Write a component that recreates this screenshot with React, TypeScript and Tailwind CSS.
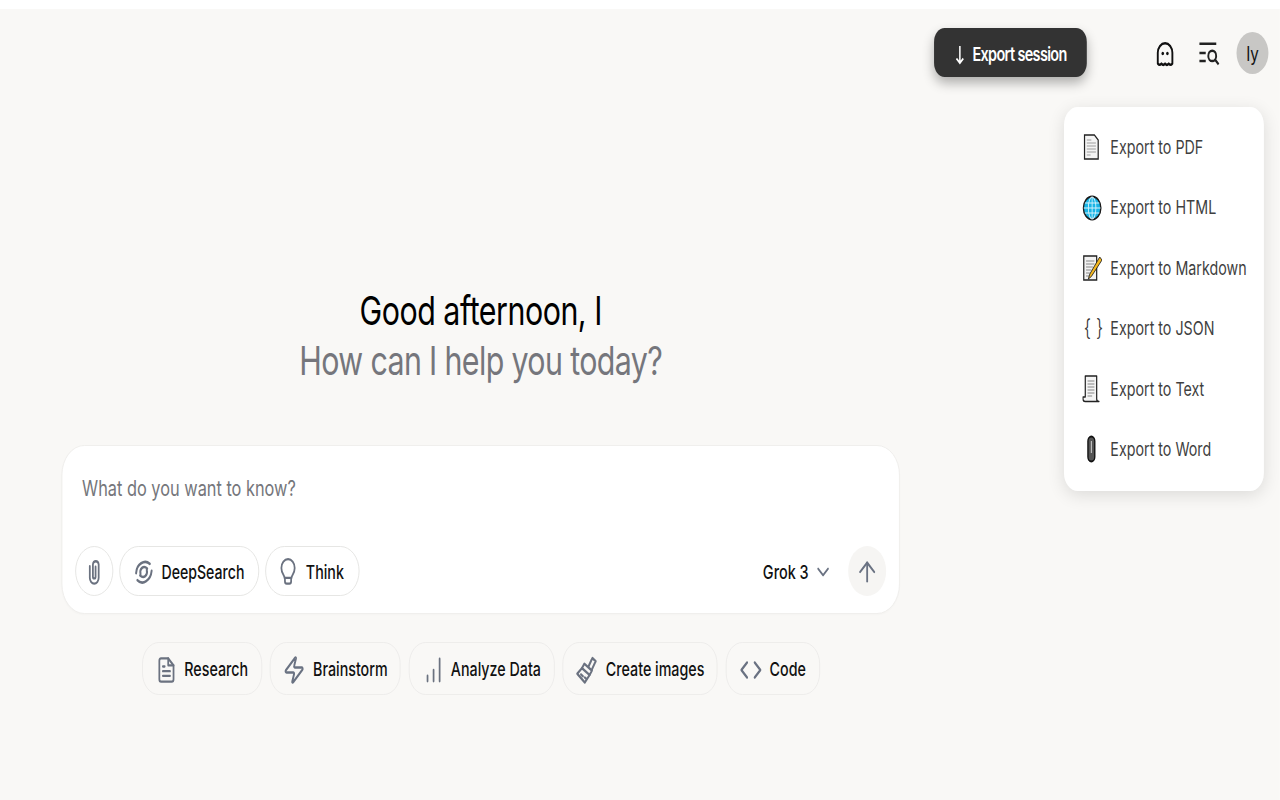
import { ArrowUp, ChevronDown, Zap, Code as CodeIcon } from 'lucide-react';
import type { ReactNode } from 'react';

const Ghost = () => (
  <svg width="28" height="26" viewBox="0 0 24 23" fill="none" stroke="#111" strokeWidth="2.200" strokeLinejoin="round">
    <path d="M3.500 20V10.500a8.500 8.500 0 0 1 17 0V20c-1.400 1.400-2.800 1.400-4.250 0-1.400 1.400-2.850 1.400-4.250 0-1.400 1.400-2.850 1.400-4.250 0-1.450 1.400-2.850 1.400-4.250 0z" />
    <circle cx="9.300" cy="11" r="1.500" fill="#111" stroke="none" />
    <circle cx="14.700" cy="11" r="1.500" fill="#111" stroke="none" />
  </svg>
);

const HistorySearch = () => (
  <svg width="30" height="28" viewBox="0 0 26 24" fill="none" stroke="#222" strokeWidth="2.200" strokeLinecap="square">
    <path d="M3 4h17M3 12h5M3 19h5" />
    <circle cx="16.500" cy="14.500" r="4.500" />
    <path d="M20 18l3 3" />
  </svg>
);

const Clip = () => (
  <svg width="28" height="30" viewBox="0 0 24 24" fill="none" stroke="#6b7280" strokeWidth="2" strokeLinecap="round">
    <path d="M7 7v10a5 5 0 0 0 10 0V5.500a3.300 3.300 0 0 0-6.500 0V16a1.500 1.500 0 0 0 3 0V7.500" />
  </svg>
);

const Swirl = () => (
  <svg width="30" height="28" viewBox="0 0 24 24" fill="none" stroke="#6b7280" strokeWidth="2.200" strokeLinecap="round">
    <path d="M19 5C13 1 4 5 3.500 13" />
    <path d="M5 19c6 5 15 0 16-8" />
    <path d="M8.500 14C7 9 12 6 16 9" />
    <path d="M15.500 10c1.500 5-3.500 8-7.500 5" />
  </svg>
);

const Bulb = () => (
  <svg width="28" height="30" viewBox="0 0 24 24" fill="none" stroke="#6b7280" strokeWidth="2" strokeLinecap="round" strokeLinejoin="round">
    <path d="M8 17c0-2.500-3.500-3.500-3.500-8.500a7.500 7.500 0 0 1 15 0c0 5-3.500 6-3.500 8.500z" />
    <path d="M8.500 17v3a2 2 0 0 0 2 2h3a2 2 0 0 0 2-2v-3" />
  </svg>
);

const ResearchDoc = () => (
  <svg width="28" height="28" viewBox="0 0 24 24" fill="none" stroke="#6b7280" strokeWidth="2" strokeLinecap="round" strokeLinejoin="round">
    <path d="M6 2h8l6 6v12a2 2 0 0 1-2 2H6a2 2 0 0 1-2-2V4a2 2 0 0 1 2-2z" />
    <path d="M14 2v6h6M8 9h2M8 13h8M8 17h8" />
  </svg>
);

const Bars = () => (
  <svg width="25" height="28" viewBox="0 0 22 24" fill="none" stroke="#6b7280" strokeWidth="2" strokeLinecap="round">
    <path d="M4 22v-5M11 22V12M18 22V2" />
  </svg>
);

const Brush = () => (
  <svg width="30" height="30" viewBox="0 0 24 24" fill="none" stroke="#6b7280" strokeWidth="2" strokeLinecap="round" strokeLinejoin="round">
    <path d="M14 9l3-5 1-1.500 3.500 2.500-1 1.500-3 5" />
    <path d="M9.500 7l8 5.500-2.500 3.500-8-5.500z" />
    <path d="M7 10.500L2 15l8 7 5-6" />
    <path d="M6 15.500l2 1.500M10 18l1.500 1" />
  </svg>
);

const ThinArrow = () => (
  <svg width="14" height="20" viewBox="0 0 14 20" fill="none" stroke="#fff" strokeWidth="2">
    <path d="M7 1v17M2.500 13.500L7 18l4.500-4.500" />
  </svg>
);

const Page = () => (
  <svg width="24" height="26" viewBox="0 0 24 26">
    <path d="M3 1h13l5 5v19H3z" fill="#f4f4f4" stroke="#222" strokeWidth="1.600" />
    <path d="M6 6h6M6 9h12M6 12h12M6 15h12M6 18h12M6 21h5" stroke="#bbb" strokeWidth="1.400" />
  </svg>
);

const Globe = () => (
  <svg width="26" height="26" viewBox="0 0 26 26">
    <circle cx="13" cy="13" r="11.500" fill="#19b5e6" stroke="#1a1a1a" strokeWidth="1.800" />
    <g fill="none" stroke="#d8f3fb" strokeWidth="1.100">
      <ellipse cx="13" cy="13" rx="5" ry="11" />
      <path d="M13 2v22M2 13h22M3.500 8h19M3.500 18h19" />
    </g>
  </svg>
);

const Memo = () => (
  <svg width="26" height="28" viewBox="0 0 26 28">
    <path d="M2 2h17v24H2z" fill="#f2f2f2" stroke="#222" strokeWidth="1.600" />
    <path d="M5 7h11M5 10h11M5 13h9M5 16h7M5 19h5M5 22h4" stroke="#aaa" strokeWidth="1.400" />
    <path d="M23 3L10 20l-2 5 4-2.500L26 6z" fill="#f5b81f" stroke="#222" strokeWidth="1" />
  </svg>
);

const Scroll = () => (
  <svg width="26" height="28" viewBox="0 0 26 28">
    <path d="M4 1h15v23c0 1.500 1 2.500 3 2.500H4c-2 0-3-1-3-2.500V22h3z" fill="#f4f4f4" stroke="#222" strokeWidth="1.600" strokeLinejoin="round" />
    <path d="M7 6h9M7 9h9M7 12h9M7 15h9M7 18h9M7 21h6" stroke="#aaa" strokeWidth="1.400" />
  </svg>
);

const Pin = () => (
  <svg width="24" height="28" viewBox="0 0 24 28">
    <rect x="7.500" y="1.500" width="9" height="25" rx="4.500" fill="#555" stroke="#111" strokeWidth="1.800" />
    <path d="M12 6v12" stroke="#ccc" strokeWidth="1.400" />
  </svg>
);

const exportItems: { label: string; icon: ReactNode }[] = [
  { label: 'Export to PDF', icon: <Page /> },
  { label: 'Export to HTML', icon: <Globe /> },
  { label: 'Export to Markdown', icon: <Memo /> },
  { label: 'Export to JSON', icon: <span className="ml-[2px] text-[23px] font-light leading-none text-[#333]">{'{ }'}</span> },
  { label: 'Export to Text', icon: <Scroll /> },
  { label: 'Export to Word', icon: <Pin /> },
];

const chips: { label: string; icon: ReactNode; w: string }[] = [
  { label: 'Research', icon: <ResearchDoc />, w: 'w-[158px]' },
  { label: 'Brainstorm', icon: <Zap size={30} strokeWidth={2} className="text-gray-500" />, w: 'w-[172px]' },
  { label: 'Analyze Data', icon: <Bars />, w: 'w-[192px] pl-[3px]' },
  { label: 'Create images', icon: <Brush />, w: 'w-[204px]' },
  { label: 'Code', icon: <CodeIcon size={30} strokeWidth={2} className="text-gray-500" />, w: 'w-[124px]' },
];

export default function App() {
  return (
    <div className="w-[1280px] h-[800px] overflow-hidden bg-white font-['Inter',sans-serif]">
      {/* the whole picture is squeezed sideways, so lay out wide and scale once */}
      <div className="w-[1684px] h-[800px] origin-top-left scale-x-[0.76] flex flex-col">
        <div className="h-[9px] shrink-0 bg-white" />
        <div className="relative flex-1 bg-[#f9f8f6]">
          <header className="flex items-center justify-end pt-[19px] pr-[15px]">
            <button className="flex items-center justify-center gap-[10px] w-[201px] h-[49px] pt-[4px] rounded-[14px] bg-[#333333] text-white text-[19px] font-semibold tracking-[-0.85px] shadow-[0_6px_14px_rgba(0,0,0,0.3)]">
              <ThinArrow />
              <span className="pt-[2px]">Export session</span>
            </button>
            <div className="ml-[85px] w-[36px] pt-[2px] flex justify-center"><Ghost /></div>
            <div className="ml-[22px] w-[36px] flex justify-center"><HistorySearch /></div>
            <div className="ml-[18px] w-[42px] h-[42px] pt-[2px] rounded-full bg-[#c8c7c5] flex items-center justify-center text-[20px] text-[#111]">Iy</div>
          </header>

          <main className="w-[1265px] flex flex-col items-center">
            <div className="mt-[209px] text-center text-[40px] leading-[50px]">
              <div className="text-black tracking-[-0.65px]">Good afternoon, I</div>
              <div className="text-[#75767c] tracking-[-0.85px]">How can I help you today?</div>
            </div>

            <div className="mt-[59px] w-[1103px] h-[169px] rounded-[30px] border border-[#eeedeb] bg-white flex flex-col justify-between pt-[29px] pb-[17px] px-[17px] shadow-[0_1px_2px_rgba(0,0,0,0.02)]">
              <div className="pl-[9px] text-[21.500px] leading-[27px] text-[#75767b]">What do you want to know?</div>
              <div className="flex items-center gap-[8px]">
                <button className="w-[50px] h-[50px] pt-[2px] rounded-full border border-[#e2e2e0] flex items-center justify-center">
                  <Clip />
                </button>
                <button className="w-[184px] h-[50px] pt-[2px] pr-[2px] rounded-full border border-[#e2e2e0] flex items-center justify-center gap-[8px] text-[18.600px] font-medium text-[#111]">
                  <Swirl />
                  <span className="pt-[2px]">DeepSearch</span>
                </button>
                <button className="w-[124px] h-[50px] pt-[2px] pr-[4px] rounded-full border border-[#e2e2e0] flex items-center justify-center gap-[9px] text-[18.800px] font-medium text-[#111]">
                  <Bulb />
                  <span className="pt-[2px]">Think</span>
                </button>
                <div className="ml-auto pt-[2px] flex items-center gap-[6px] text-[19px] font-medium text-[#111]">
                  <span className="pt-[2px]">Grok 3</span>
                  <ChevronDown size={26} strokeWidth={2} className="text-gray-500" />
                </div>
                <button className="ml-[12px] w-[50px] h-[50px] pt-[2px] rounded-full bg-[#f6f5f3] flex items-center justify-center text-gray-500">
                  <ArrowUp size={32} strokeWidth={1.800} />
                </button>
              </div>
            </div>

            <div className="mt-[28px] flex gap-[10.500px]">
              {chips.map((c) => (
                <div key={c.label} className={`${c.w} h-[53px] pt-[3px] rounded-[22px] border border-[#ecebe9] flex items-center justify-center gap-[10px] text-[18.800px] font-medium text-[#111]`}>
                  {c.icon}
                  {c.label}
                </div>
              ))}
            </div>
          </main>

          <div className="absolute top-[98px] right-[21px] w-[263px] h-[384px] rounded-[18px] bg-white pt-[10px] pl-[24px] shadow-[0_4px_20px_rgba(0,0,0,0.12)]">
            {exportItems.map((item) => (
              <div key={item.label} className="h-[60.400px] flex items-center text-[18.800px] text-[#3f3f3f]">
                <span className="w-[37px] flex justify-start">{item.icon}</span>
                <span className="pt-[2px]">{item.label}</span>
              </div>
            ))}
          </div>
        </div>
      </div>
    </div>
  );
}
